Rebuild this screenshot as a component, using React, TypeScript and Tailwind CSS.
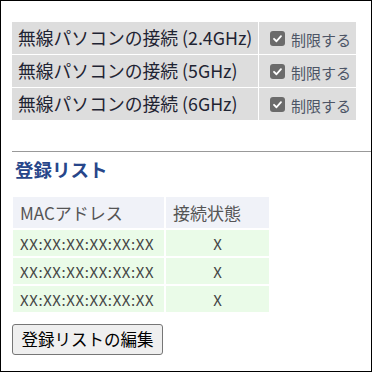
import React from 'react';

const rows = ['無線パソコンの接続 (2.4GHz)', '無線パソコンの接続 (5GHz)', '無線パソコンの接続 (6GHz)'];
const macs = ['XX:XX:XX:XX:XX:XX', 'XX:XX:XX:XX:XX:XX', 'XX:XX:XX:XX:XX:XX'];

function CheckBox() {
  return (
    <span className="inline-flex w-[15px] h-[15px] rounded-[3px] bg-[#6b6b6b] items-center justify-center">
      <svg width="11" height="11" viewBox="0 0 12 12">
        <path d="M2.2 6.3 L4.9 9 L9.8 3.4" stroke="#fff" strokeWidth="2" fill="none" strokeLinecap="round" strokeLinejoin="round" />
      </svg>
    </span>
  );
}

export default function App() {
  const font = { fontFamily: '"Noto Sans CJK JP", "Noto Sans", sans-serif' };
  return (
    <div className="w-[372px] h-[372px] border border-black bg-white overflow-hidden" style={font}>
      <div className="pl-[10px] pt-[20px]">
        <table className="border-separate border-spacing-[1px]">
          <tbody>
            {rows.map((r) => (
              <tr key={r}>
                <td className="w-[246px] h-[32px] bg-[#dddddd] pl-[6px] text-[17.8px] text-[#1f2433] leading-none whitespace-nowrap">{r}</td>
                <td className="w-[97px] h-[32px] bg-[#dddddd] pl-[11px]">
                  <div className="flex items-center gap-[6px]">
                    <CheckBox />
                    <span className="text-[15px] text-[#4d5566] leading-none pt-[3px]">制限する</span>
                  </div>
                </td>
              </tr>
            ))}
          </tbody>
        </table>
      </div>

      <div className="ml-[11px] mt-[30px] border-t border-[#999]" />

      <div className="pl-[10px]">
        <h3 className="pl-[4px] mt-[5px] text-[18.5px] font-bold text-[#27468a] leading-[24px]">登録リスト</h3>
        <table className="mt-[14px] border-separate border-spacing-[2px]">
          <thead>
            <tr>
              <th className="w-[151px] h-[31px] bg-[#f0f2f8] pl-[7px] text-left font-normal text-[17px] text-[#555] leading-none">MACアドレス</th>
              <th className="w-[103px] h-[31px] bg-[#f0f2f8] pl-[7px] text-left font-normal text-[17px] text-[#555] leading-none">接続状態</th>
            </tr>
          </thead>
          <tbody>
            {macs.map((m, i) => (
              <tr key={i}>
                <td className="h-[26px] bg-[#eafbe8] pl-[7px] text-[15px] text-[#444] leading-none tracking-[0.6px] whitespace-nowrap">{m}</td>
                <td className="h-[26px] bg-[#eafbe8] text-center text-[15px] text-[#444] leading-none">X</td>
              </tr>
            ))}
          </tbody>
        </table>
        <button className="ml-[1px] mt-[10px] w-[151px] h-[31px] bg-[#efefef] border border-[#767676] rounded-[3px] text-[16.5px] text-black leading-none">
          登録リストの編集
        </button>
      </div>
    </div>
  );
}
